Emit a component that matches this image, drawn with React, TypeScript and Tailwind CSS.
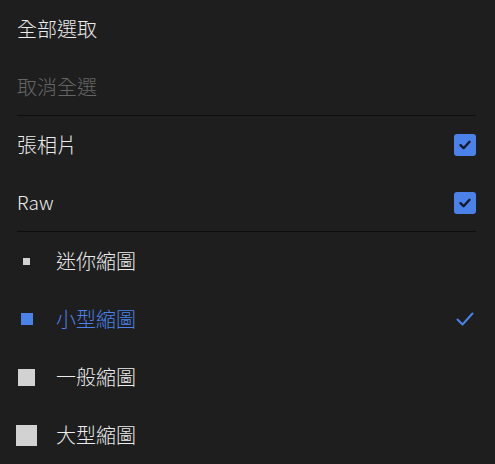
import React, { useState } from 'react';

const FONT = '"Noto Sans CJK TC", "Noto Sans", sans-serif';

const CheckBox: React.FC<{ checked: boolean; onToggle: () => void }> = ({ checked, onToggle }) => (
  <button
    onClick={onToggle}
    className={`w-[22px] h-[22px] rounded-[3px] flex items-center justify-center ${checked ? 'bg-[#4a82ea]' : 'border-2 border-[#8a8a8a]'}`}
  >
    {checked && (
      <svg width="14" height="14" viewBox="0 0 14 14" fill="none">
        <path d="M2.5 7.2 L5.6 10.2 L11.5 3.8" stroke="#15192a" strokeWidth="2.4" strokeLinecap="round" strokeLinejoin="round" />
      </svg>
    )}
  </button>
);

const SIZES = [
  { id: 'mini', label: '迷你縮圖', box: 'w-[7px] h-[7px]' },
  { id: 'small', label: '小型縮圖', box: 'w-[12px] h-[12px]' },
  { id: 'normal', label: '一般縮圖', box: 'w-[17px] h-[17px]' },
  { id: 'large', label: '大型縮圖', box: 'w-[21px] h-[21px]' },
];

const App: React.FC = () => {
  const [photos, setPhotos] = useState(true);
  const [raw, setRaw] = useState(true);
  const [size, setSize] = useState('small');

  return (
    <div className="w-[495px] h-[464px] bg-[#1e1e1e] overflow-hidden font-light" style={{ fontFamily: FONT }}>
      <div className="pl-[17px] pr-[19px]">
        {/* Selection */}
        <div className="h-[58px] flex items-center text-[20px] text-[#ececec]">全部選取</div>
        <div className="h-[58px] flex items-center text-[20px] text-[#666666] border-b border-[#0e0e0e]">取消全選</div>

        {/* Filters */}
        <div className="h-[58px] flex items-center justify-between">
          <span className="text-[20px] text-[#ececec]">張相片</span>
          <CheckBox checked={photos} onToggle={() => setPhotos(!photos)} />
        </div>
        <div className="h-[58px] flex items-center justify-between border-b border-[#0e0e0e]">
          <span className="text-[19px] text-[#ececec]">Raw</span>
          <CheckBox checked={raw} onToggle={() => setRaw(!raw)} />
        </div>

        {/* Thumbnail size */}
        {SIZES.map(s => {
          const active = s.id === size;
          return (
            <button
              key={s.id}
              onClick={() => setSize(s.id)}
              className="w-full h-[58px] flex items-center justify-between"
            >
              <span className="flex items-center">
                <span className="w-[19px] mr-[20px] flex items-center justify-center">
                  <span className={`${s.box} shrink-0 ${active ? 'bg-[#4a82ea]' : 'bg-[#d2d2d2]'}`} />
                </span>
                <span className={`text-[20px] ${active ? 'text-[#4a82ea]' : 'text-[#ececec]'}`}>{s.label}</span>
              </span>
              {active && (
                <svg width="20" height="16" viewBox="0 0 20 16" fill="none" className="mr-[1px]">
                  <path d="M2.5 8.5 L7.5 13.5 L17.5 2.5" stroke="#4a82ea" strokeWidth="2" strokeLinecap="round" strokeLinejoin="round" />
                </svg>
              )}
            </button>
          );
        })}
      </div>
    </div>
  );
};

export default App;
